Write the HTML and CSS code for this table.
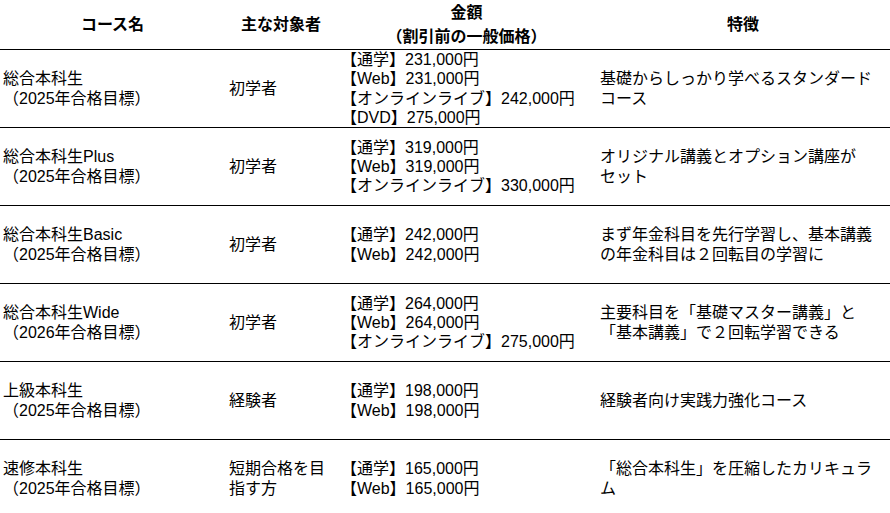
FILE: index.html
```html
<!DOCTYPE html>
<html lang="ja">
<head>
<meta charset="utf-8">
<title>コース一覧</title>
<link rel="stylesheet" href="styles.css">
</head>
<body>
<div class="table">
  <div class="row head">
    <div class="cell">コース名</div>
    <div class="cell">主な対象者</div>
    <div class="cell">金額<br>（割引前の一般価格）</div>
    <div class="cell">特徴</div>
  </div>
  <div class="row">
    <div class="cell c1">総合本科生<br>（2025年合格目標）</div>
    <div class="cell">初学者</div>
    <div class="cell">【通学】231,000円<br>【Web】231,000円<br>【オンラインライブ】242,000円<br>【DVD】275,000円</div>
    <div class="cell">基礎からしっかり学べるスタンダードコース</div>
  </div>
  <div class="row">
    <div class="cell c1">総合本科生Plus<br>（2025年合格目標）</div>
    <div class="cell">初学者</div>
    <div class="cell">【通学】319,000円<br>【Web】319,000円<br>【オンラインライブ】330,000円</div>
    <div class="cell">オリジナル講義とオプション講座が<span class="nowrap">セット</span></div>
  </div>
  <div class="row">
    <div class="cell c1">総合本科生Basic<br>（2025年合格目標）</div>
    <div class="cell">初学者</div>
    <div class="cell">【通学】242,000円<br>【Web】242,000円</div>
    <div class="cell">まず年金科目を先行学習し、基本講義の年金科目は２回転目の学習に</div>
  </div>
  <div class="row">
    <div class="cell c1">総合本科生Wide<br>（2026年合格目標）</div>
    <div class="cell">初学者</div>
    <div class="cell">【通学】264,000円<br>【Web】264,000円<br>【オンラインライブ】275,000円</div>
    <div class="cell">主要科目を「基礎マスター講義」と「基本講義」で２回転学習できる</div>
  </div>
  <div class="row">
    <div class="cell c1">上級本科生<br>（2025年合格目標）</div>
    <div class="cell">経験者</div>
    <div class="cell">【通学】198,000円<br>【Web】198,000円</div>
    <div class="cell">経験者向け実践力強化コース</div>
  </div>
  <div class="row">
    <div class="cell c1">速修本科生<br>（2025年合格目標）</div>
    <div class="cell">短期合格を目指す方</div>
    <div class="cell">【通学】165,000円<br>【Web】165,000円</div>
    <div class="cell">「総合本科生」を圧縮したカリキュラム</div>
  </div>
</div>
</body>
</html>
```

FILE: styles.css
```css
html, body {
  margin: 0;
  padding: 0;
  background: #fff;
}
body {
  font-family: "Liberation Sans", "Noto Sans CJK JP", sans-serif;
  font-size: 16px;
  line-height: 1.2;
  color: #000;
}
.table {
  width: 890px;
}
.row {
  display: grid;
  grid-template-columns: 225px 112px 259px 294px;
  height: 77px;
  align-items: center;
  border-bottom: 1px solid #000;
}
.row.head {
  height: 49px;
  font-weight: bold;
  line-height: 24px;
  text-align: center;
}
.cell {
  padding: 0 4px;
  overflow-wrap: anywhere;
}
.cell.c1 {
  padding-left: 3px;
}
.nowrap {
  white-space: nowrap;
}
```
